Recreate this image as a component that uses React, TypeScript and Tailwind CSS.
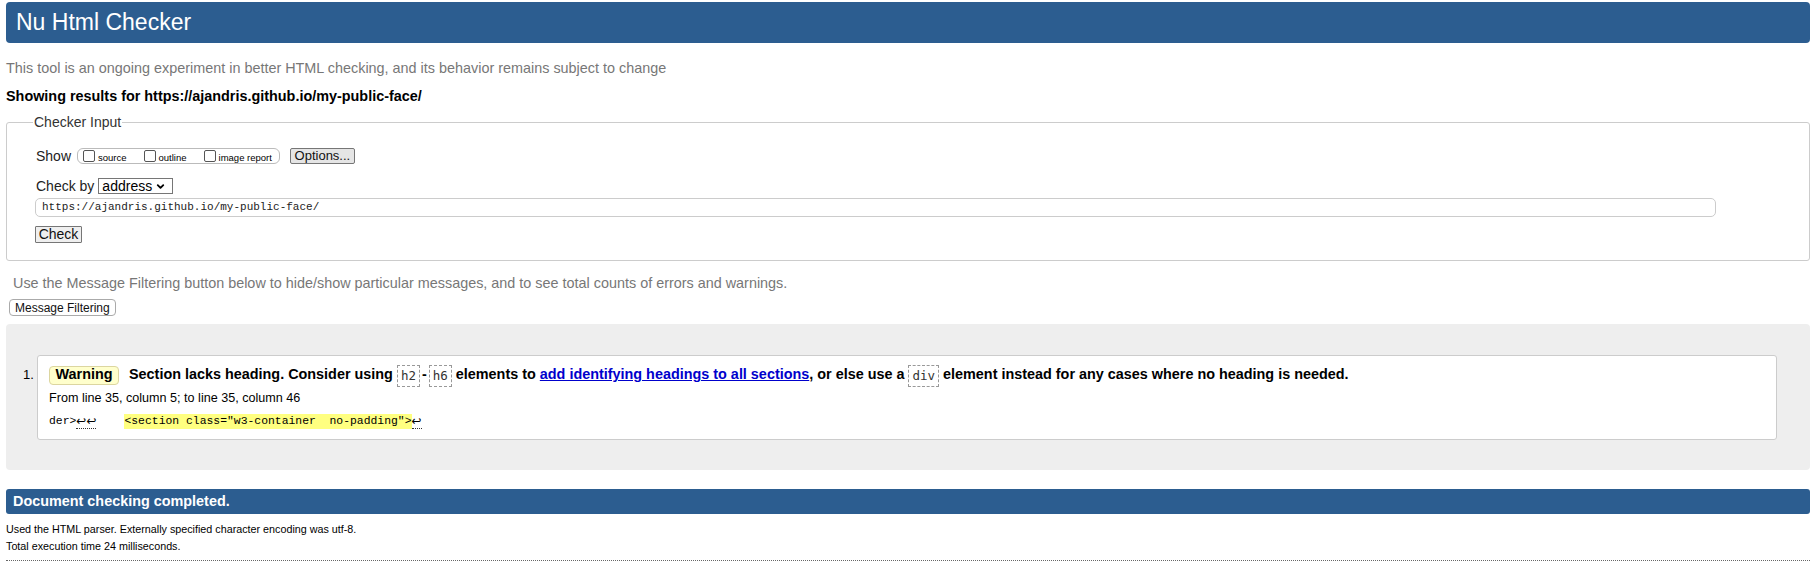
import { ChevronDown } from "lucide-react";

const BLUE = "bg-[#2c5d90]";

function Box({ label }: { label: string }) {
  return (
    <span className="flex items-center gap-[3px] whitespace-nowrap">
      <span className="w-[12px] h-[12px] border border-[#555] rounded-[2px] bg-white" />
      <span className="text-[9.5px] leading-[12px] mt-[3px]">{label}</span>
    </span>
  );
}

function Chip({ children }: { children: React.ReactNode }) {
  return (
    <code className="inline-block align-middle border border-dashed border-[#999] px-[3px] leading-[20px] font-['DejaVu_Sans_Mono',monospace] font-normal text-[12.5px] text-[#333]">
      {children}
    </code>
  );
}

export default function App() {
  return (
    <div className="w-[1820px] min-h-[567px] bg-white text-black font-['Liberation_Sans',Arial,sans-serif]">
      <div className="pl-[6px] w-[1810px] flex flex-col">
        {/* Header */}
        <div className={`${BLUE} mt-[2px] h-[41px] rounded-[4px] flex items-center pl-[10px]`}>
          <h1 className="text-white text-[23px] leading-none">Nu Html Checker</h1>
        </div>

        <p className="mt-[17px] text-[14.4px] leading-[16px] text-[#777]">
          This tool is an ongoing experiment in better HTML checking, and its behavior remains subject to change
        </p>
        <p className="mt-[12px] text-[14.4px] leading-[16px] font-bold">
          Showing results for https://ajandris.github.io/my-public-face/
        </p>

        {/* Checker input */}
        <fieldset className="mt-[10px] border border-[#ccc] rounded-[3px] pl-[29px] pb-[14px]">
          <legend className="ml-[-3px] px-[1px] text-[14px] leading-[16px] text-[#333]">Checker Input</legend>

          <div className="mt-[17px] h-[18px] flex items-center">
            <span className="text-[14px] text-[#222]">Show</span>
            <div className="ml-[6px] h-[16px] border border-[#bbb] rounded-[6px] flex items-center pl-[5px] pr-[7px] gap-[17px]">
              <Box label="source" />
              <Box label="outline" />
              <Box label="image report" />
            </div>
            <button className="ml-[10px] h-[16px] w-[65px] border border-[#767676] bg-[#e5e5e5] rounded-[2px] text-[13px] leading-[14px] text-[#111]">
              Options...
            </button>
          </div>

          <div className="mt-[12px] h-[18px] flex items-center">
            <span className="text-[14px] text-[#222]">Check by</span>
            <div className="ml-[4px] h-[16px] w-[75px] border border-[#767676] bg-white flex items-center justify-between pl-[3px] pr-[6px]">
              <span className="text-[14px] leading-[14px]">address</span>
              <ChevronDown className="w-[11px] h-[11px]" strokeWidth={4} />
            </div>
          </div>

          <div className="mt-[3px] ml-[-1px] h-[19px] w-[1681px] border border-[#ccc] rounded-[5px] flex items-center pl-[6px]">
            <span className="text-[11px] font-['Liberation_Mono',monospace] text-[#222]">
              https://ajandris.github.io/my-public-face/
            </span>
          </div>

          <button className="mt-[9px] ml-[-1px] h-[17px] w-[47px] border border-[#767676] bg-[#efefef] rounded-[1px] text-[14px] leading-[15px] text-[#111]">
            Check
          </button>
        </fieldset>

        <p className="mt-[14px] pl-[7px] text-[14.4px] leading-[16px] text-[#777]">
          Use the Message Filtering button below to hide/show particular messages, and to see total counts of errors and warnings.
        </p>
        <div className="mt-[8px] pl-[3px] flex">
          <button className="h-[17px] px-[5px] border border-[#aaa] rounded-[4px] bg-white text-[12px] leading-[14px] text-[#111]">
            Message Filtering
          </button>
        </div>

        {/* Results */}
        <div className="mt-[8px] bg-[#eee] rounded-[4px] pt-[31px] pb-[30px] pl-[31px] pr-[33px]">
          <div className="flex">
            <span className="w-0 relative right-[14px] mt-[12px] text-[13px] leading-[16px]">1.</span>
            <div className="flex-1 bg-white border border-[#ccc] rounded-[3px] pl-[11px] pt-[8px] pb-[10px]">
              <div className="flex items-center h-[22px]">
                <span className="bg-[#ffffcc] border border-[#dcd6a0] rounded-[4px] h-[19px] w-[70px] flex items-center justify-center text-[14.4px] font-bold">
                  Warning
                </span>
                <span className="ml-[10px] text-[14.4px] leading-[22px] font-bold whitespace-nowrap">
                  Section lacks heading. Consider using <Chip>h2</Chip>
                  <span className="mx-[2px]">-</span>
                  <Chip>h6</Chip> elements to{" "}
                  <a className="text-[#0000cc] underline">add identifying headings to all sections</a>, or else use a{" "}
                  <Chip>div</Chip> element instead for any cases where no heading is needed.
                </span>
              </div>
              <p className="mt-[5px] text-[12.6px] leading-[15px]">
                From line 35, column 5; to line 35, column 46
              </p>
              <p className="mt-[8px] text-[11.4px] leading-[15px] font-['Liberation_Mono',monospace] whitespace-pre flex items-start">
                <span>der&gt;</span>
                <span className="border-b border-dotted border-[#333] text-[12px] leading-[14px] font-['DejaVu_Sans',sans-serif]">↩↩</span>
                <span className="w-[28px]" />
                <span className="bg-[#ffff80]">&lt;section class="w3-container  no-padding"&gt;</span>
                <span className="border-b border-dotted border-[#333] text-[12px] leading-[14px] font-['DejaVu_Sans',sans-serif]">↩</span>
              </p>
            </div>
          </div>
        </div>

        {/* Footer */}
        <div className={`${BLUE} mt-[19px] h-[25px] rounded-[3px] flex items-center pl-[7px]`}>
          <span className="text-white font-bold text-[14.4px]">Document checking completed.</span>
        </div>
        <p className="mt-[9px] text-[10.75px] leading-[13px]">
          Used the HTML parser. Externally specified character encoding was utf-8.
        </p>
        <p className="mt-[4px] text-[10.75px] leading-[13px]">Total execution time 24 milliseconds.</p>
        <div className="mt-[7px] border-t border-dotted border-[#666]" />
      </div>
    </div>
  );
}
